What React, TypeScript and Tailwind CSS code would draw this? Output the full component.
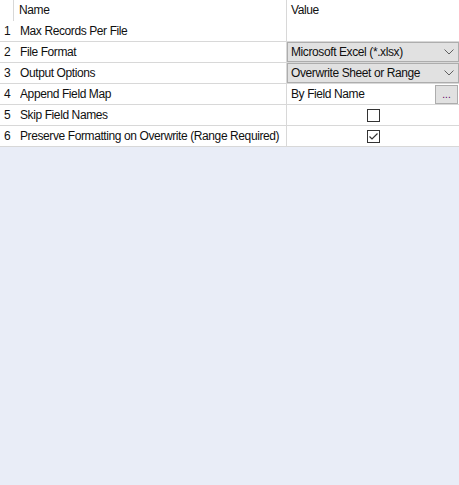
import React from "react";

const Chevron = () => (
  <svg width="10" height="6" viewBox="0 0 10 6" className="shrink-0">
    <path d="M0.5 0.5 L5 5 L9.5 0.5" fill="none" stroke="#606060" strokeWidth="1" />
  </svg>
);

const Check = ({ checked }: { checked: boolean }) => (
  <div className="w-[13px] h-[13px] border border-[#333333] bg-white flex items-center justify-center">
    {checked && (
      <svg width="11" height="11" viewBox="0 0 11 11">
        <path d="M1.5 5.5 L4 8 L9.5 2.5" fill="none" stroke="#333333" strokeWidth="1.2" />
      </svg>
    )}
  </div>
);

const Row = ({ n, name, children }: { n: string; name: string; children?: React.ReactNode }) => (
  <div className="flex h-[21px] border-b border-[#d8d8d8]">
    <div className="w-[20px] pl-[4px] leading-[20px]">{n}</div>
    <div className="w-[266px] leading-[20px] whitespace-nowrap overflow-hidden">{name}</div>
    <div className="w-[173px] border-l border-[#d8d8d8] flex">{children}</div>
  </div>
);

export default function App() {
  return (
    <div
      className="w-[459px] h-[485px] bg-[#e9edf7] text-[12px] tracking-[-0.4px] text-[#101010]"
      style={{ fontFamily: '"Liberation Sans", Arial, sans-serif' }}
    >
      <div className="bg-white">
        <div className="flex h-[21px]">
          <div className="w-[14px] border-r border-[#d8d8d8]"></div>
          <div className="w-[272px] pl-[5px] leading-[21px]">Name</div>
          <div className="w-[173px] border-l border-[#d8d8d8] pl-[4px] leading-[21px]">Value</div>
        </div>
        <Row n="1" name="Max Records Per File" />
        <Row n="2" name="File Format">
          <div className="flex-1 bg-[#e1e1e1] border border-[#adadad] flex items-center justify-between pl-[3px] pr-[4px]">
            <span>Microsoft Excel (*.xlsx)</span>
            <Chevron />
          </div>
        </Row>
        <Row n="3" name="Output Options">
          <div className="flex-1 bg-[#e1e1e1] border border-[#adadad] flex items-center justify-between pl-[3px] pr-[4px]">
            <span>Overwrite Sheet or Range</span>
            <Chevron />
          </div>
        </Row>
        <Row n="4" name="Append Field Map">
          <div className="flex-1 pl-[4px] leading-[20px]">By Field Name</div>
          <div className="w-[23px] h-[19px] mr-[1px] mt-[1px] bg-[#e1e1e1] border border-[#adadad] flex items-end justify-center pb-[3px] text-[10px] tracking-normal leading-none text-[#600060]">
            ...
          </div>
        </Row>
        <Row n="5" name="Skip Field Names">
          <div className="flex-1 flex items-center justify-center">
            <Check checked={false} />
          </div>
        </Row>
        <Row n="6" name="Preserve Formatting on Overwrite (Range Required)">
          <div className="flex-1 flex items-center justify-center">
            <Check checked={true} />
          </div>
        </Row>
      </div>
    </div>
  );
}
